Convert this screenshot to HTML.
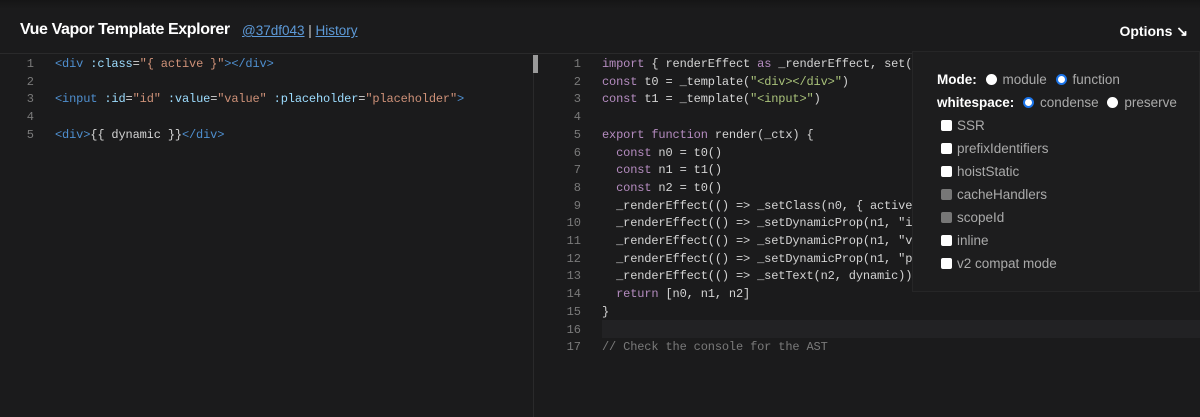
<!DOCTYPE html>
<html><head><meta charset="utf-8"><style>
*{margin:0;padding:0;box-sizing:border-box}
body{width:1200px;height:417px;background:#1b1b1c;overflow:hidden;position:relative;font-family:"Liberation Sans",sans-serif;color:#ddd}
.top{position:absolute;left:0;top:0;width:1200px;height:9px;background:linear-gradient(#151516,#1b1b1c)}
.hdr{position:absolute;left:0;top:0;width:1200px;height:54px;border-bottom:1px solid #2a2a2b}
.title{position:absolute;left:20px;top:21px;font-size:16px;font-weight:bold;color:#fff;letter-spacing:-0.4px}
.links{position:absolute;left:242px;top:23px;font-size:13.5px;color:#ccc}
.links a{color:#5d9ad8;text-decoration:underline}
.opt{position:absolute;right:12px;top:23px;font-size:14px;font-weight:bold;color:#fff}
.code{position:absolute;font-family:"Liberation Mono",monospace;font-size:12px;letter-spacing:-0.15px;white-space:pre;line-height:17.7px}
.ln{position:absolute;font-family:"Liberation Mono",monospace;font-size:12px;line-height:17.7px;color:#7a7a7a;text-align:right;white-space:pre}
.t{color:#4f8fcf}.a{color:#9cdcfe}.s{color:#ce9178}.p{color:#808080}.k{color:#b58cc0}.w{color:#d4d4d4}.g{color:#a9c27a}.c{color:#7a7a7a}
.div{position:absolute;left:533px;top:55px;width:1px;height:362px;background:#2a2a2b}
.sb{position:absolute;left:533px;top:55px;width:5px;height:18px;background:#9a9a9a}
.hl{position:absolute;left:602px;top:320px;width:598px;height:18px;background:#222224}
.panel{position:absolute;left:912px;top:51px;width:288px;height:241px;background:#1d1d1e;border:1px solid #262627;font-size:13.5px;color:#aaa}
.row{position:absolute;left:24px;white-space:nowrap}
.row b{color:#fff}
.rad{display:inline-block;width:11px;height:11px;border-radius:50%;background:#fff;vertical-align:-1px;margin:0 6px 0 5px}
.rad.on{background:#fff;border:2.5px solid #1a73e8}
.cb{display:inline-block;width:11px;height:11px;background:#fff;border-radius:2px;vertical-align:-1px;margin:0 5px 0 4px}
.cb.d{background:#777}
</style></head><body>
<div class="top"></div>
<div class="hdr"></div>
<div class="title">Vue Vapor Template Explorer</div>
<div class="links"><a>@37df043</a> | <a>History</a></div>
<div class="opt">Options ↘</div>
<div class="ln" style="left:20px;top:56px;width:14px">1
2
3
4
5</div>
<div class="code" style="left:55px;top:56px"><span class="t">&lt;div</span> <span class="a">:class</span><span class="w">=</span><span class="s">"{ active }"</span><span class="t">&gt;&lt;/div&gt;</span>

<span class="t">&lt;input</span> <span class="a">:id</span><span class="w">=</span><span class="s">"id"</span> <span class="a">:value</span><span class="w">=</span><span class="s">"value"</span> <span class="a">:placeholder</span><span class="w">=</span><span class="s">"placeholder"</span><span class="t">&gt;</span>

<span class="t">&lt;div&gt;</span><span class="w">{{ dynamic }}</span><span class="t">&lt;/div&gt;</span></div>
<div class="div"></div><div class="sb"></div>
<div class="hl"></div>
<div class="ln" style="left:560px;top:56px;width:21px">1
2
3
4
5
6
7
8
9
10
11
12
13
14
15
16
17</div>
<div class="code w" style="left:602px;top:56px"><span class="k">import</span> { renderEffect <span class="k">as</span> _renderEffect, set(
<span class="k">const</span> t0 = _template(<span class="g">"&lt;div&gt;&lt;/div&gt;"</span>)
<span class="k">const</span> t1 = _template(<span class="g">"&lt;input&gt;"</span>)

<span class="k">export function</span> render(_ctx) {
  <span class="k">const</span> n0 = t0()
  <span class="k">const</span> n1 = t1()
  <span class="k">const</span> n2 = t0()
  _renderEffect(() =&gt; _setClass(n0, { active
  _renderEffect(() =&gt; _setDynamicProp(n1, "i
  _renderEffect(() =&gt; _setDynamicProp(n1, "v
  _renderEffect(() =&gt; _setDynamicProp(n1, "p
  _renderEffect(() =&gt; _setText(n2, dynamic))
  <span class="k">return</span> [n0, n1, n2]
}

<span class="c">// Check the console for the AST</span></div>
<div class="panel">
<div class="row" style="top:20px"><b>Mode:</b> <span class="rad"></span>module <span class="rad on"></span>function</div>
<div class="row" style="top:43px"><b>whitespace:</b> <span class="rad on"></span>condense <span class="rad"></span>preserve</div>
<div class="row" style="top:66px"><span class="cb"></span>SSR</div>
<div class="row" style="top:89px"><span class="cb"></span>prefixIdentifiers</div>
<div class="row" style="top:112px"><span class="cb"></span>hoistStatic</div>
<div class="row" style="top:135px"><span class="cb d"></span>cacheHandlers</div>
<div class="row" style="top:158px"><span class="cb d"></span>scopeId</div>
<div class="row" style="top:181px"><span class="cb"></span>inline</div>
<div class="row" style="top:204px"><span class="cb"></span>v2 compat mode</div>
</div>
</body></html>
